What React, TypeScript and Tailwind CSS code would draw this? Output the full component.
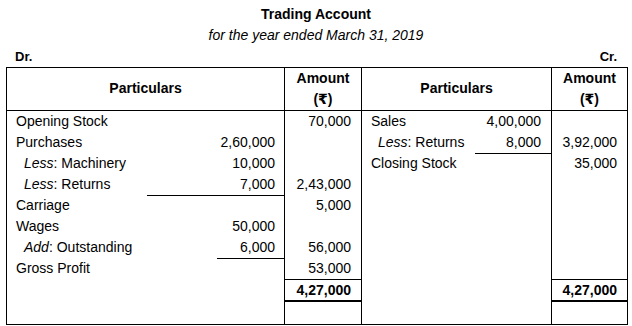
import React from 'react';

type Line = {
    label?: string;
    italic?: string; // e.g. "Less"
    indent?: boolean;
    sub?: string;
    subLine?: string; // width class for the underline box
    amount?: string;
};

const leftRows: Line[] = [
    { label: 'Opening Stock', amount: '70,000' },
    { label: 'Purchases', sub: '2,60,000' },
    { italic: 'Less', label: ': Machinery', indent: true, sub: '10,000' },
    { italic: 'Less', label: ': Returns', indent: true, sub: '7,000', subLine: 'w-[137px]', amount: '2,43,000' },
    { label: 'Carriage', amount: '5,000' },
    { label: 'Wages', sub: '50,000' },
    { italic: 'Add', label: ': Outstanding', indent: true, sub: '6,000', subLine: 'w-[67px]', amount: '56,000' },
    { label: 'Gross Profit', amount: '53,000' },
];

const rightRows: Line[] = [
    { label: 'Sales', sub: '4,00,000' },
    { italic: 'Less', label: ': Returns', indent: true, sub: '8,000', subLine: 'w-[76px]', amount: '3,92,000' },
    { label: 'Closing Stock', amount: '35,000' },
];

const Particulars = ({ row, side }: { row?: Line; side: 'left' | 'right' }) => {
    const pad = side === 'left'
        ? (row?.indent ? 'pl-[17px]' : 'pl-[9px]')
        : (row?.indent ? 'pl-[16px]' : 'pl-[9px]');
    return (
        <div className={`h-[21px] flex items-start justify-between ${pad} ${side === 'right' ? 'border-l border-black' : ''}`}>
            <span className="whitespace-nowrap">
                {row?.italic && <i>{row.italic}</i>}
                {row?.label}
            </span>
            {row?.sub && (
                <span className={`h-[22px] text-right shrink-0 ${side === 'left' ? 'pr-[9px]' : 'pr-[10px]'} ${row.subLine ? `${row.subLine} border-b border-black` : ''}`}>
                    {row.sub}
                </span>
            )}
        </div>
    );
};

const Amount = ({ value }: { value?: string }) => (
    <div className="h-[21px] border-l border-black text-right pr-[10px]">{value}</div>
);

export default function App() {
    const rows = Array.from({ length: 8 }, (_, i) => i);

    return (
        <div className="w-[632px] h-[326px] bg-white text-black text-[14px] leading-[21px] font-['Liberation_Sans','DejaVu_Sans',Arial,sans-serif]">
            {/* Title */}
            <div className="pt-[4px] text-center">
                <div className="font-bold">Trading Account</div>
                <div className="italic">for the year ended March 31, 2019</div>
            </div>
            <div className="flex justify-between pl-[15px] pr-[15px] text-[13px] font-bold">
                <span>Dr.</span>
                <span>Cr.</span>
            </div>

            {/* Account */}
            <div className="ml-[6px] w-[622px] border border-black grid grid-cols-[277px_77px_190px_76px]">
                {/* Header */}
                <div className="h-[43px] border-b border-black flex items-center justify-center font-bold pb-[2px]">Particulars</div>
                <div className="h-[43px] border-b border-l border-black text-center font-bold">
                    <div>Amount</div>
                    <div>(₹)</div>
                </div>
                <div className="h-[43px] border-b border-l border-black flex items-center justify-center font-bold pb-[2px]">Particulars</div>
                <div className="h-[43px] border-b border-l border-black text-center font-bold">
                    <div>Amount</div>
                    <div>(₹)</div>
                </div>

                {rows.map((i) => (
                    <React.Fragment key={i}>
                        <Particulars row={leftRows[i]} side="left" />
                        <Amount value={leftRows[i]?.amount} />
                        <Particulars row={rightRows[i]} side="right" />
                        <Amount value={rightRows[i]?.amount} />
                    </React.Fragment>
                ))}

                {/* Totals */}
                <div className="h-[23px]" />
                <div className="h-[23px] border-l border-t border-b-2 border-black text-right pr-[10px] font-bold leading-[20px]">4,27,000</div>
                <div className="h-[23px] border-l border-black" />
                <div className="h-[23px] border-l border-t border-b-2 border-black text-right pr-[10px] font-bold leading-[20px]">4,27,000</div>

                {/* Blank */}
                <div className="h-[22px]" />
                <div className="h-[22px] border-l border-black" />
                <div className="h-[22px] border-l border-black" />
                <div className="h-[22px] border-l border-black" />
            </div>
        </div>
    );
}
